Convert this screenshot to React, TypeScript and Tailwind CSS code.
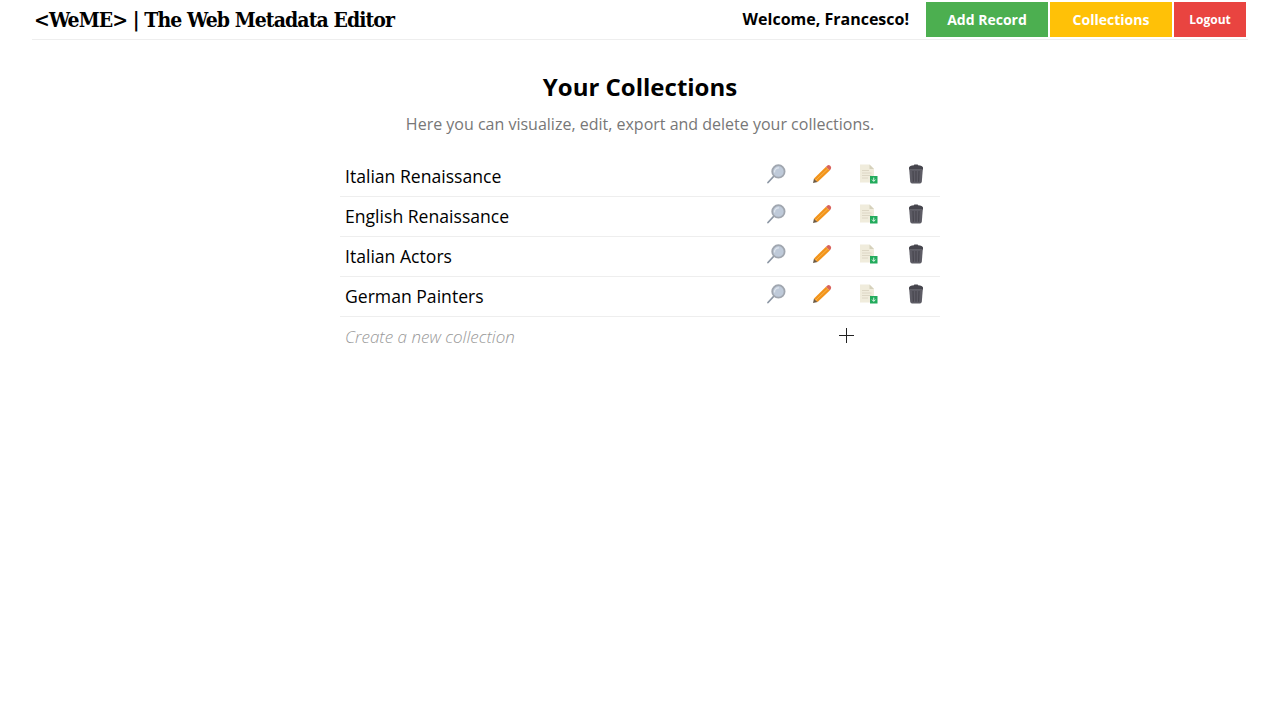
import React from 'react';

const collections = ['Italian Renaissance', 'English Renaissance', 'Italian Actors', 'German Painters'];

const SearchIcon = () => (
  <svg width="20" height="20" viewBox="0 0 20 20">
    <path d="M2 18.5 L8 12" stroke="#8d97a5" strokeWidth="1.8" strokeLinecap="round" />
    <circle cx="12.4" cy="7.4" r="6.2" fill="#bfcad9" stroke="#a0a6af" strokeWidth="1.8" />
    <path d="M8.5 8.5 A4 4 0 0 1 13 4" stroke="#dfe5ed" strokeWidth="1.2" fill="none" />
  </svg>
);

const PencilIcon = () => (
  <svg width="20" height="20" viewBox="0 0 20 20">
    <path d="M1 19 L2 14.4 L5.6 18 Z" fill="#6b5a45" />
    <path d="M2 14.4 L14 2.8 L17.8 6.6 L5.6 18 Z" fill="#f2931a" />
    <path d="M3.8 16.2 L15.8 4.8" stroke="#f9b64d" strokeWidth="1" />
    <path d="M14 2.8 L15.8 1.2 Q16.8 0.6 18 1.6 L18.8 2.5 Q19.6 3.8 18.8 4.9 L17.8 6.6 Z" fill="#d9635c" />
  </svg>
);

const ExportIcon = () => (
  <svg width="20" height="20" viewBox="0 0 20 20">
    <path d="M1 0.5 H10.5 L15 5 V18.5 H1 Z" fill="#f0ecdc" />
    <path d="M10.5 0.5 L15 5 H10.5 Z" fill="#d6d1bc" />
    <path d="M3 6.5 H10 M3 9 H12.5 M3 11.5 H12.5 M3 14 H9" stroke="#dad5c2" strokeWidth="0.9" />
    <rect x="11" y="12" width="7.5" height="7.5" fill="#22ab5c" />
    <path d="M14.75 13.6 V17.2 M13 15.6 L14.75 17.4 L16.5 15.6" stroke="#dff5e8" strokeWidth="1" fill="none" />
  </svg>
);

const TrashIcon = () => (
  <svg width="20" height="20" viewBox="0 0 20 20">
    <path d="M3 3.6 Q3.4 1.6 8 1.2 L8.2 0.4 H11.8 L12 1.2 Q16.6 1.6 17 3.6 L17 5.8 H3 Z" fill="#46454d" />
    <path d="M3.2 5.2 H16.8 L15.8 17.8 Q15.5 19.4 14 19.4 H6 Q4.5 19.4 4.2 17.8 Z" fill="#5d5c65" />
    <path d="M7 7 L7.4 17.8 M10 7 V17.8 M13 7 L12.6 17.8" stroke="#48474f" strokeWidth="1.2" />
  </svg>
);

export default function App() {
  return (
    <div className="min-h-[703px] bg-white text-black font-['Open_Sans',sans-serif]">
      {/* top bar */}
      <header className="mx-[32px] h-[40px] flex items-center justify-between border-b border-[#eeeeee] pl-[2px] pr-[2px]">
        <h1 className="font-['DejaVu_Serif_Condensed','DejaVu_Serif',serif] font-bold text-[21px] tracking-[-0.91px] leading-none">
          &lt;WeME&gt; | The Web Metadata Editor
        </h1>
        <div className="flex items-center h-[35px] mb-[1px]">
          <span className="font-bold text-[16px] mr-[17px]">Welcome, Francesco!</span>
          <div className="flex gap-[2px] h-full">
            <button className="w-[122px] bg-[#4caf50] text-white font-bold text-[14px]">Add Record</button>
            <button className="w-[122px] bg-[#ffc107] text-white font-bold text-[14px]">Collections</button>
            <button className="w-[72px] bg-[#e94440] text-white font-bold text-[12px] pt-[2px]">Logout</button>
          </div>
        </div>
      </header>

      <main className="w-[600px] mx-auto pt-[30px]">
        <h2 className="text-center font-bold text-[24px] leading-[34px]">Your Collections</h2>
        <p className="text-center text-[#777777] font-medium text-[16px] leading-[24px] mt-[8px]">
          Here you can visualize, edit, export and delete your collections.
        </p>

        <ul className="mt-[21px]">
          {collections.map((name) => (
            <li key={name} className="h-[40px] flex items-center border-b border-[#eeeeee] pl-[5px] text-[17.6px]">
              <span className="flex-1">{name}</span>
              <div className="flex items-center mb-[5px] mr-[14px] gap-[26px]">
                <SearchIcon />
                <PencilIcon />
                <span className="ml-[1px]"><ExportIcon /></span>
                <span className="ml-[1px]"><TrashIcon /></span>
              </div>
            </li>
          ))}
          <li className="h-[40px] flex items-center pl-[5px]">
            <span className="w-[494px] italic font-light text-[17px] text-[#999999] mb-[1px]">Create a new collection</span>
            <svg width="15" height="15" viewBox="0 0 15 15" className="mb-[4px]">
              <path d="M7.5 0 V15 M0 7.5 H15" stroke="#222222" strokeWidth="1" />
            </svg>
          </li>
        </ul>
      </main>
    </div>
  );
}
